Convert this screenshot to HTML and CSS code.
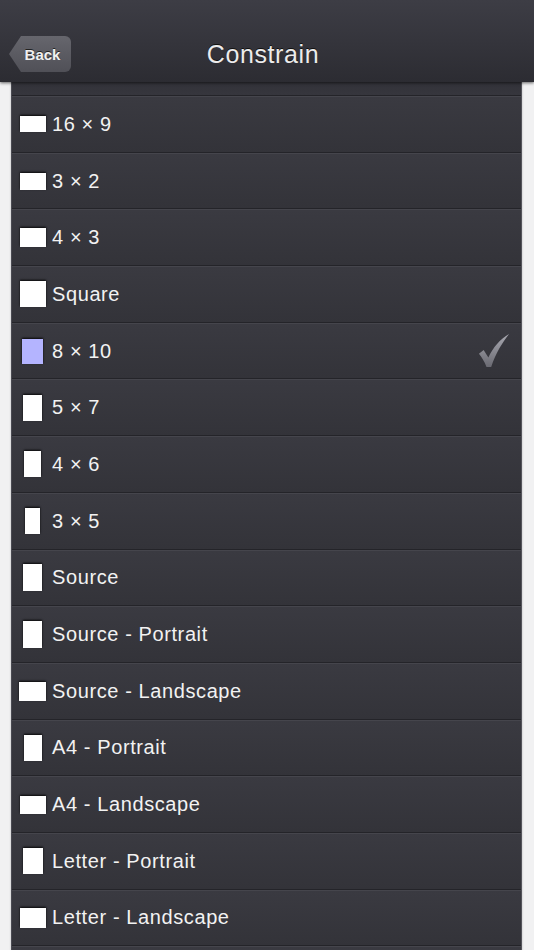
FILE: index.html
```html
<!DOCTYPE html>
<html>
<head>
<meta charset="utf-8">
<link rel="stylesheet" href="styles.css">
</head>
<body>
<div class="page">
  <header class="nav">
    <div class="nav-left"><button class="back">Back</button></div>
    <h1 class="title">Constrain</h1>
    <div class="nav-right"></div>
  </header>
  <main class="panel">
    <div class="strip"></div>
    <div class="row"><span class="ico"><i class="shape" style="width:26px;height:16px"></i></span><span class="label">16 × 9</span></div>
    <div class="row"><span class="ico"><i class="shape" style="width:26px;height:17px"></i></span><span class="label">3 × 2</span></div>
    <div class="row"><span class="ico"><i class="shape" style="width:26px;height:19px"></i></span><span class="label">4 × 3</span></div>
    <div class="row"><span class="ico"><i class="shape" style="width:26px;height:26px"></i></span><span class="label">Square</span></div>
    <div class="row"><span class="ico"><i class="shape sel" style="width:21px;height:25px"></i></span><span class="label">8 × 10</span>
      <svg class="check" width="32" height="36" viewBox="0 0 34 36">
        <defs><linearGradient id="cg" x1="0" y1="0" x2="0" y2="1"><stop offset="0" stop-color="#a8a8b0"/><stop offset="1" stop-color="#6a6a72"/></linearGradient></defs>
        <path d="M1 21 L6 17 L11 25 C16 14 24 5 33 0 C26 9 19 20 14 35 L9 35 C7 29 4 25 1 21 Z" fill="url(#cg)"/>
      </svg>
    </div>
    <div class="row"><span class="ico"><i class="shape" style="width:19px;height:26px"></i></span><span class="label">5 × 7</span></div>
    <div class="row"><span class="ico"><i class="shape" style="width:17px;height:26px"></i></span><span class="label">4 × 6</span></div>
    <div class="row"><span class="ico"><i class="shape" style="width:15px;height:26px"></i></span><span class="label">3 × 5</span></div>
    <div class="row"><span class="ico"><i class="shape" style="width:19px;height:27px"></i></span><span class="label">Source</span></div>
    <div class="row"><span class="ico"><i class="shape" style="width:19px;height:27px"></i></span><span class="label">Source - Portrait</span></div>
    <div class="row"><span class="ico"><i class="shape" style="width:27px;height:19px"></i></span><span class="label">Source - Landscape</span></div>
    <div class="row"><span class="ico"><i class="shape" style="width:18px;height:26px"></i></span><span class="label">A4 - Portrait</span></div>
    <div class="row"><span class="ico"><i class="shape" style="width:26px;height:18px"></i></span><span class="label">A4 - Landscape</span></div>
    <div class="row"><span class="ico"><i class="shape" style="width:20px;height:26px"></i></span><span class="label">Letter - Portrait</span></div>
    <div class="row"><span class="ico"><i class="shape" style="width:26px;height:20px"></i></span><span class="label">Letter - Landscape</span></div>
    <div class="row"></div>
  </main>
</div>
</body>
</html>
```
FILE: styles.css
```css
html, body {
  margin: 0;
  padding: 0;
}
body {
  background: #f1f1f2;
  font-family: "Liberation Sans", Arial, sans-serif;
  width: 534px;
  height: 950px;
  overflow: hidden;
}
.page {
  position: relative;
  height: 950px;
}
.nav {
  position: relative;
  z-index: 2;
  height: 82px;
  box-sizing: border-box;
  background: linear-gradient(#3d3d45, #34343b 55%, #2c2c32);
  display: grid;
  grid-template-columns: 1fr auto 1fr;
  align-items: center;
  padding-top: 26px;
  box-shadow: 0 1px 3px rgba(0,0,0,0.6);
}
.nav-left {
  padding-left: 9px;
}
.back {
  height: 36px;
  width: 62px;
  padding: 0 0 0 5px;
  border: none;
  background: linear-gradient(#66666d, #505057);
  color: #f0f0f0;
  font-family: "Liberation Sans", Arial, sans-serif;
  font-weight: bold;
  font-size: 15px;
  text-shadow: 0 -1px 0 #222;
  clip-path: polygon(12px 0, 100% 0, 100% 100%, 12px 100%, 0 50%);
  border-radius: 6px;
}
.title {
  margin: 0;
  font-weight: normal;
  font-size: 25px;
  color: #ececec;
  text-shadow: 0 -1px 0 #111;
  letter-spacing: 0.6px;
  transform: translateX(-4px);
}
.panel {
  position: relative;
  z-index: 1;
  margin: -14px 12px 0 11px;
  background: #36363d;
  border-left: 1px solid #4a4a52;
  border-right: 1px solid #55555c;
  box-shadow: 0 0 2px rgba(0,0,0,0.25);
}
.strip {
  height: 27px;
  background: linear-gradient(#2f2f35, #36363d);
  border-bottom: 1px solid #242429;
}
.row {
  display: flex;
  align-items: center;
  background: linear-gradient(#3a3a41, #333339);
  border-top: 1px solid #45454c;
  border-bottom: 1px solid #242429;
  box-sizing: content-box;
  height: 54.7px;
}
.ico {
  width: 27px;
  margin-left: 7px;
  display: flex;
  justify-content: center;
  align-items: center;
}
.shape {
  display: block;
  background: #ffffff;
  box-shadow: 0 -1px 2px rgba(0,0,0,0.9);
}
.shape.sel {
  background: #b4b4ff;
}
.label {
  margin-left: 6px;
  color: #f2f2f2;
  font-size: 20px;
  letter-spacing: 0.6px;
  flex: 1;
}
.check {
  margin-right: 11px;
}
```
